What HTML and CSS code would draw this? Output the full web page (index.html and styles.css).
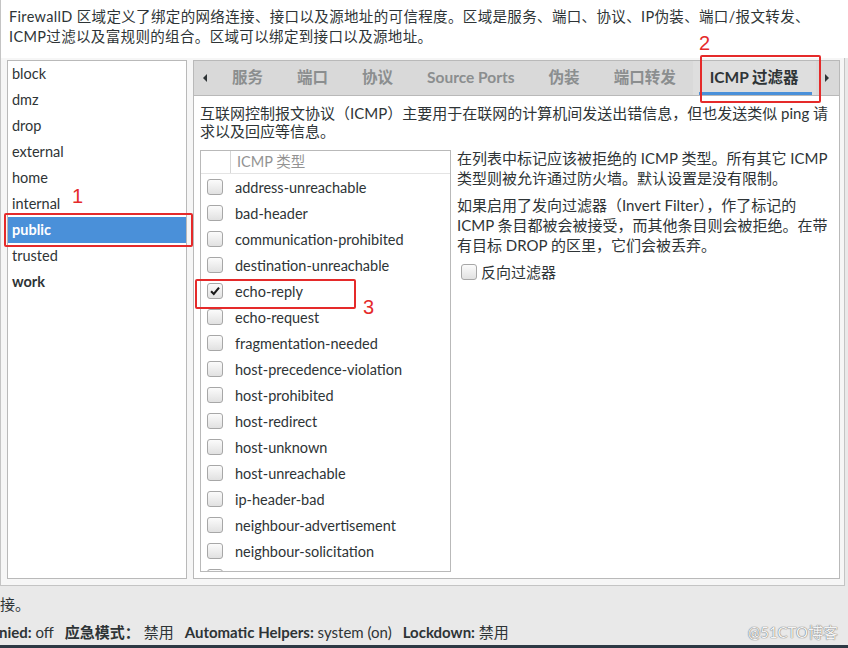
FILE: index.html
```html
<!DOCTYPE html>
<html lang="zh-CN">
<head>
  <meta charset="UTF-8">
  <title>防火墙配置 – 区域</title>
  <link rel="stylesheet" href="styles.css">
</head>
<body>
  <div class="intro">
    FirewallD 区域定义了绑定的网络连接、接口以及源地址的可信程度。区域是服务、端口、协议、IP伪装、端口/报文转发、<br>
    ICMP过滤以及富规则的组合。区域可以绑定到接口以及源地址。
  </div>

  <div class="main">
    <ul class="zones">
      <li>block</li>
      <li>dmz</li>
      <li>drop</li>
      <li>external</li>
      <li>home</li>
      <li>internal</li>
      <li class="selected">public</li>
      <li>trusted</li>
      <li class="default">work</li>
    </ul>

    <div class="notebook">
      <div class="tabs">
        <span class="arrow arrow-left"></span>
        <span class="tab">服务</span>
        <span class="tab">端口</span>
        <span class="tab">协议</span>
        <span class="tab">Source Ports</span>
        <span class="tab">伪装</span>
        <span class="tab">端口转发</span>
        <span class="tab active">ICMP 过滤器</span>
        <span class="arrow arrow-right"></span>
      </div>

      <div class="page">
        <p class="lead">互联网控制报文协议（ICMP）主要用于在联网的计算机间发送出错信息，但也发送类似 ping 请<br>求以及回应等信息。</p>

        <div class="icmp">
          <div class="typelist">
            <div class="head">
              <span class="head-check"></span>
              <span class="head-name">ICMP 类型</span>
            </div>
            <div class="rows">
              <div class="row"><span class="check"></span>address-unreachable</div>
              <div class="row"><span class="check"></span>bad-header</div>
              <div class="row"><span class="check"></span>communication-prohibited</div>
              <div class="row"><span class="check"></span>destination-unreachable</div>
              <div class="row"><span class="check checked"><svg viewBox="0 0 16 16" width="14" height="14"><path d="M3.5 8.2 L6.6 11.3 L12.6 4.2" fill="none" stroke="#1a1a1a" stroke-width="2.4"/></svg></span>echo-reply</div>
              <div class="row"><span class="check"></span>echo-request</div>
              <div class="row"><span class="check"></span>fragmentation-needed</div>
              <div class="row"><span class="check"></span>host-precedence-violation</div>
              <div class="row"><span class="check"></span>host-prohibited</div>
              <div class="row"><span class="check"></span>host-redirect</div>
              <div class="row"><span class="check"></span>host-unknown</div>
              <div class="row"><span class="check"></span>host-unreachable</div>
              <div class="row"><span class="check"></span>ip-header-bad</div>
              <div class="row"><span class="check"></span>neighbour-advertisement</div>
              <div class="row"><span class="check"></span>neighbour-solicitation</div>
              <div class="row row-peek"><span class="check"></span></div>
            </div>
          </div>

          <div class="help">
            <p>在列表中标记应该被拒绝的 ICMP 类型。所有其它 ICMP<br>类型则被允许通过防火墙。默认设置是没有限制。</p>
            <p>如果启用了发向过滤器（Invert Filter），作了标记的<br>ICMP 条目都被会被接受，而其他条目则会被拒绝。在带<br>有目标 DROP 的区里，它们会被丢弃。</p>
            <label class="invert"><span class="check"></span>反向过滤器</label>
          </div>
        </div>
      </div>
    </div>
  </div>

  <div class="statusbar">
    <div class="hint">接。</div>
    <div class="status">
      <span><b>nied:</b> off</span>
      <span><b>应急模式：</b> 禁用</span>
      <span><b>Automatic Helpers:</b> system (on)</span>
      <span><b>Lockdown:</b> 禁用</span>
      <span class="mark">@51CTO博客</span>
    </div>
  </div>
  <div class="taskbar"></div>

  <!-- red annotations drawn over the screenshot -->
  <div class="mark-box box-1"></div>
  <div class="mark-num num-1">1</div>
  <div class="mark-box box-2"></div>
  <div class="mark-num num-2">2</div>
  <div class="mark-box box-3"></div>
  <div class="mark-num num-3">3</div>
</body>
</html>
```

FILE: styles.css
```css
:root {
  --border: #b9b9b9;
  --text: #2e3436;
  --muted: #8b8e8f;
  --select: #4a90d9;
  --red: #e52a2a;
}
html, body {
  margin: 0;
  padding: 0;
}
body {
  width: 848px;
  height: 648px;
  overflow: hidden;
  position: relative;
  font-family: 'Lato', 'Noto Sans CJK SC', sans-serif;
  font-size: 14.5px;
  color: var(--text);
  background: #e9e9e9;
}
p {
  margin: 0;
}

.intro {
  height: 58px;
  box-sizing: border-box;
  padding: 7px 0 0 8px;
  font-size: 14.5px;
  letter-spacing: 0.35px;
  line-height: 20px;
  background: #fff;
  border-left: 1px solid #c4c4c4;
  white-space: nowrap;
}

.main {
  display: flex;
  gap: 6px;
  width: 845px;
  height: 528px;
  box-sizing: border-box;
  padding: 2px 0 6px 6px;
  background: #f6f6f6;
  border-left: 1px solid #c4c4c4;
  border-right: 1px solid #c4c4c4;
  border-bottom: 1px solid #c4c4c4;
}

.zones {
  list-style: none;
  margin: 0;
  padding: 0;
  width: 180px;
  box-sizing: border-box;
  background: #fff;
  border: 1px solid var(--border);
}
.zones li {
  height: 26px;
  line-height: 25px;
  padding-left: 4px;
}
.zones li.selected {
  background: var(--select);
  color: #fff;
  font-weight: bold;
}
.zones li.default {
  font-weight: bold;
}

.notebook {
  width: 647px;
  box-sizing: border-box;
  border: 1px solid var(--border);
  background: #fff;
  display: flex;
  flex-direction: column;
}
.tabs {
  display: flex;
  height: 35px;
  box-sizing: border-box;
  background: #d9d9d9;
  border-bottom: 1px solid var(--border);
  font-size: 15.5px;
  font-weight: bold;
  color: var(--muted);
}
.arrow {
  width: 21px;
  position: relative;
}
.arrow::after {
  content: '';
  position: absolute;
  top: 13px;
  border-top: 4px solid transparent;
  border-bottom: 4px solid transparent;
}
.arrow-left::after {
  left: 9px;
  border-right: 4px solid #2e3436;
}
.arrow-right::after {
  left: 9px;
  border-left: 4px solid #2e3436;
}
.tab {
  padding: 0 17px;
  line-height: 32px;
  white-space: nowrap;
  position: relative;
}
.tab.active {
  color: var(--text);
  background: #dedede;
}
.tab.active::after {
  content: '';
  position: absolute;
  left: 6px;
  right: 4px;
  bottom: 0;
  height: 3px;
  background: var(--select);
}

.page {
  flex: 1;
  padding: 8px 6px 5px 6px;
  display: flex;
  flex-direction: column;
}
.lead {
  font-size: 15px;
  line-height: 18px;
  margin-bottom: 10px;
  white-space: nowrap;
}
.icmp {
  flex: 1;
  display: flex;
  gap: 6px;
}
.typelist {
  width: 251px;
  height: 422px;
  box-sizing: border-box;
  border: 1px solid var(--border);
  overflow: hidden;
}
.head {
  display: flex;
  height: 22px;
  border-bottom: 1px solid #e4e4e4;
  color: #939393;
}
.head-check {
  width: 29px;
  border-right: 1px solid #d6d6d6;
}
.head-name {
  padding-left: 6px;
  line-height: 22px;
}
.row {
  display: flex;
  align-items: center;
  height: 26px;
  padding-left: 6px;
  white-space: nowrap;
}
.check {
  width: 14px;
  height: 14px;
  border: 1px solid #a7a7a7;
  border-radius: 3px;
  background: linear-gradient(#fbfbfb, #e1e1e1);
  margin-right: 12px;
  flex: none;
  display: flex;
  align-items: center;
  justify-content: center;
}

.help {
  margin-top: -2px;
  font-size: 15px;
  line-height: 20px;
  white-space: nowrap;
}
.help p {
  margin-bottom: 7px;
}
.invert {
  display: flex;
  align-items: center;
  height: 20px;
  padding-left: 4px;
}
.invert .check {
  margin-right: 4px;
}

.statusbar {
  height: 59px;
  box-sizing: border-box;
  padding-top: 8px;
  font-size: 15px;
  line-height: 20px;
}
.status {
  display: flex;
  gap: 11px;
  margin-top: 8px;
  margin-left: -1px;
  padding-right: 10px;
}
.status b {
  font-weight: bold;
}
.mark {
  margin-left: auto;
  color: #f4f4f4;
  text-shadow: 0 0 1px #6f6f6f, 0 0 1px #6f6f6f;
}
.taskbar {
  height: 3px;
  background: #2c3944;
}

.mark-box {
  position: absolute;
  border: 2px solid var(--red);
  border-radius: 2px;
}
.box-1 { left: 4px; top: 213px; width: 185px; height: 30px; }
.box-2 { left: 700px; top: 55px; width: 117px; height: 44px; }
.box-3 { left: 195px; top: 279px; width: 157px; height: 26px; }
.mark-num {
  position: absolute;
  color: var(--red);
  font-family: 'Liberation Sans', sans-serif;
  font-size: 20px;
  line-height: 20px;
}
.num-1 { left: 72px; top: 186px; }
.num-2 { left: 699px; top: 33px; }
.num-3 { left: 363px; top: 297px; }
```
